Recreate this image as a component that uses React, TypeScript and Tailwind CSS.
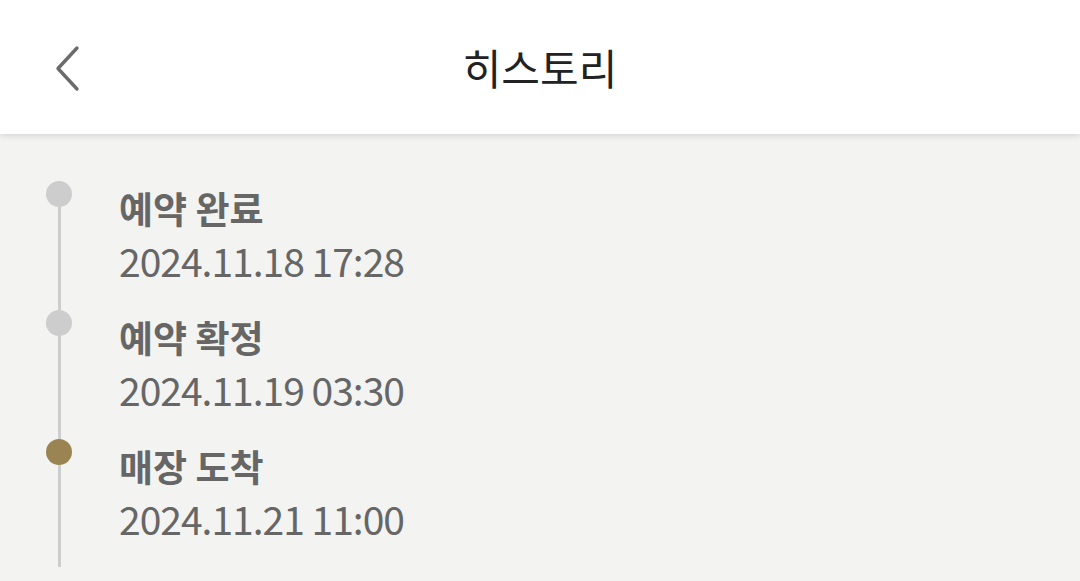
import React from "react";

const items = [
  { title: "예약 완료", date: "2024.11.18 17:28", active: false },
  { title: "예약 확정", date: "2024.11.19 03:30", active: false },
  { title: "매장 도착", date: "2024.11.21 11:00", active: true },
];

export default function App() {
  return (
    <div
      className="w-[1080px] h-[581px] bg-[#f3f3f2] overflow-hidden flex flex-col"
      style={{ fontFamily: '"Noto Sans CJK KR", "Noto Sans", sans-serif' }}
    >
      <header className="relative h-[134px] shrink-0 bg-white shadow-[0_2px_6px_rgba(0,0,0,0.12)] flex items-center justify-center z-10">
        <button className="absolute left-[50px] top-[42px] w-[36px] h-[52px] flex items-center justify-center">
          <svg width="36" height="52" viewBox="0 0 36 52">
            <path
              d="M27 6 L8 26.5 L27 47"
              fill="none"
              stroke="#6b6b6b"
              strokeWidth="3.4"
              strokeLinecap="round"
              strokeLinejoin="round"
            />
          </svg>
        </button>
        <h1 className="text-[42px] leading-none text-[#222] font-normal">히스토리</h1>
      </header>
      <main className="pt-[46px] pl-[46px]">
        {items.map((it, i) => (
          <div key={i} className="flex">
            <div className="w-[26px] flex flex-col items-center shrink-0">
              <div className={`w-[3px] h-[1px] ${i === 0 ? "bg-transparent" : "bg-[#cdcdcd]"}`} />
              <div
                className={`w-[26px] h-[26px] rounded-full shrink-0 ${
                  it.active ? "bg-[#9a8552]" : "bg-[#cdcdcd]"
                }`}
              />
              <div className="w-[3px] flex-1 bg-[#cdcdcd]" />
            </div>
            <div className="ml-[47px] pb-[25px]">
              <div className="text-[37px] leading-[56px] font-bold text-[#666]">{it.title}</div>
              <div className="text-[39px] leading-[48px] tracking-[-1px] text-[#666]">{it.date}</div>
            </div>
          </div>
        ))}
      </main>
    </div>
  );
}
